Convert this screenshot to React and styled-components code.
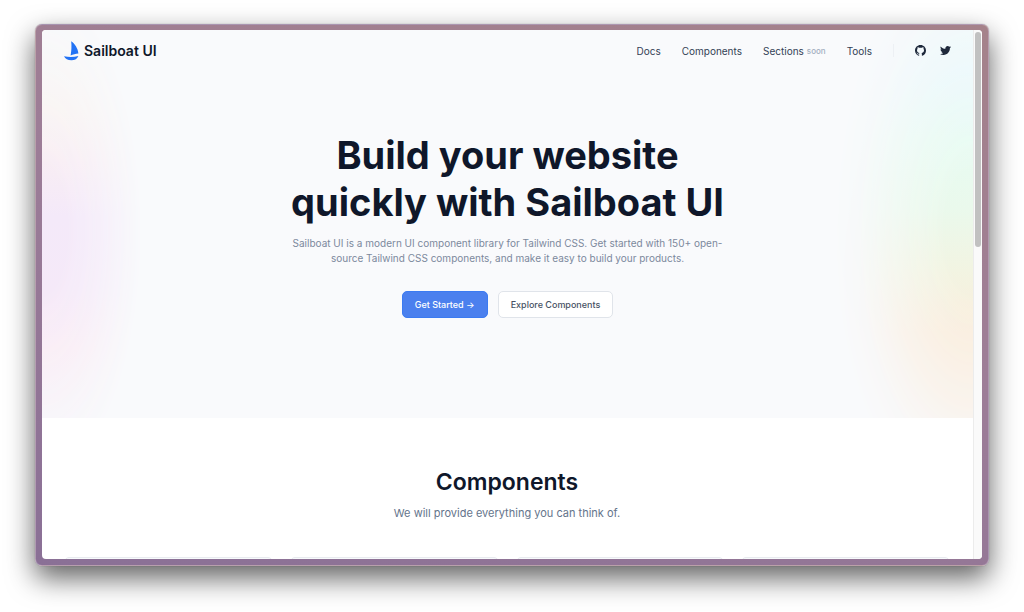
import React from "react";
import styled, { createGlobalStyle } from "styled-components";
import { FaTwitter } from "react-icons/fa";

const GlobalStyle = createGlobalStyle`
  *, *::before, *::after { box-sizing: border-box; }
  body {
    margin: 0;
    background: #fff;
    color: #0f172a;
    font-family: Inter, "Liberation Sans", sans-serif;
  }
  h1, h2, p { margin: 0; }
  a { color: inherit; text-decoration: none; }
`;

const Desktop = styled.div`
  display: flex;
  height: 100vh;
  padding: 24px 35px 46px;
  overflow: hidden;
`;

const Frame = styled.div`
  display: flex;
  flex: 1;
  min-width: 0;
  padding: 5px 6px 6px;
  border: 1px solid rgba(255, 255, 255, 0.25);
  border-radius: 7px;
  background: linear-gradient(195deg, #a5828a 0%, #9d7d97 45%, #8a7096 100%);
  box-shadow: 0 0 1px rgba(0, 0, 0, 0.4), 0 12px 28px rgba(0, 0, 0, 0.62);
`;

const Browser = styled.div`
  display: flex;
  flex: 1;
  min-width: 0;
  overflow: hidden;
  border-radius: 4px;
  background: #fff;
`;

const Page = styled.div`
  flex: 1;
  min-width: 0;
`;

const ScrollTrack = styled.div`
  width: 9px;
  padding: 2px 1px;
  border-left: 1px solid #ececec;
  background: #fafafa;
`;

const ScrollThumb = styled.div`
  width: 6px;
  height: 41%;
  border-radius: 3px;
  background: #c1c1c1;
`;

const Top = styled.div`
  position: relative;
  background: #f9fafc;
`;

const Glow = styled.div`
  position: absolute;
  top: 0;
  bottom: 0;
  pointer-events: none;
`;

const LeftGlow = styled(Glow)`
  left: 0;
  width: 100px;
  background: linear-gradient(#f8f7f6 0%, #f9f3f1 20%, #f8edf4 34%, #f4e9f9 48%, #f5e9f8 68%, #faeaf4 82%, #f7eff7 100%);
  mask-image: radial-gradient(100px 250px at 0 200px, #000 25%, rgba(0, 0, 0, 0.6) 60%, rgba(0, 0, 0, 0.12) 90%, transparent);
`;

const RightGlow = styled(Glow)`
  right: 0;
  width: 140px;
  background: linear-gradient(#e4f9f8 0%, #e5f8fb 10%, #e7fbf2 28%, #eaf9ec 46%, #f2f4e2 62%, #faecda 78%, #faecdc 100%);
  mask-image: radial-gradient(140px 290px at 100% 200px, #000 20%, rgba(0, 0, 0, 0.55) 55%, rgba(0, 0, 0, 0.12) 82%, transparent);
`;

const Header = styled.header`
  position: relative;
  display: flex;
  align-items: center;
  justify-content: space-between;
  height: 41px;
  padding: 0 22px;
`;

const Brand = styled.a`
  display: flex;
  align-items: center;
  gap: 5px;
  font-size: 14px;
  font-weight: 600;
  line-height: 20px;
`;

const Nav = styled.nav`
  display: flex;
  align-items: center;
  gap: 21px;
  color: #334155;
  font-size: 10px;
  line-height: 16px;
`;

const NavLink = styled.a`
  display: flex;
  align-items: center;
  gap: 3px;
`;

const Soon = styled.span`
  color: #a3afc0;
  font-size: 8px;
  font-weight: 500;
`;

const Social = styled.div`
  display: flex;
  gap: 14px;
  padding-left: 21px;
  border-left: 1px solid #edf0f4;
  color: #1e293b;
`;

const IconLink = styled.a`
  display: flex;
  padding: 1px 0;
`;

const Hero = styled.section`
  position: relative;
  display: flex;
  flex-direction: column;
  align-items: center;
  padding: 61px 20px 100px;
  text-align: center;
`;

const Title = styled.h1`
  max-width: 460px;
  font-size: 38px;
  font-weight: 700;
  line-height: 47px;
`;

const Lead = styled.p`
  max-width: 450px;
  margin-top: 10px;
  color: #7c899d;
  font-size: 10px;
  line-height: 15px;
`;

const Actions = styled.div`
  display: flex;
  gap: 10px;
  margin-top: 25px;
`;

const Button = styled.button`
  height: 27px;
  padding: 0 12px;
  border: 1px solid ${({ $primary }) => ($primary ? "#3b7bf2" : "#e0e4ea")};
  border-radius: 5px;
  background: ${({ $primary }) => ($primary ? "#4b80ee" : "#fff")};
  color: ${({ $primary }) => ($primary ? "#fff" : "#475264")};
  font: 500 9px/16px Inter, "Liberation Sans", sans-serif;
  white-space: nowrap;
`;

const Showcase = styled.section`
  padding: 49px 23px 0 22px;
  text-align: center;
`;

const SectionTitle = styled.h2`
  font-size: 23px;
  font-weight: 600;
  line-height: 30px;
`;

const SectionText = styled.p`
  margin-top: 8px;
  color: #64748b;
  font-size: 11px;
  line-height: 16px;
`;

const CardGrid = styled.div`
  display: grid;
  grid-template-columns: repeat(4, 1fr);
  gap: 17px;
  margin-top: 36px;
`;

const Card = styled.div`
  height: 140px;
  border: 1px solid #e8ebef;
  border-radius: 5px;
  background: #f8fafc;
`;

const Boat = () => (
  <svg width="15" height="20" viewBox="0 0 15 20" aria-hidden="true">
    <path d="M7.200 0.300C11 3 14 7.500 14.400 12.600C11.600 12.800 9 13.400 6.600 14.600C7.500 10 7.700 5 7.200 .300Z" fill="#2272f4" />
    <path d="M0 15.200C4.800 16.300 9.800 16.200 14.400 15C13.300 17.800 11 19.300 7.400 19.300C3.800 19.300 1.300 18 0 15.200Z" fill="#2272f4" />
  </svg>
);

const GitHubMark = () => (
  <svg width="11" height="11" viewBox="0 0 16 16" fill="currentColor" aria-hidden="true">
    <path d="M8 0C3.58 0 0 3.58 0 8c0 3.54 2.29 6.53 5.47 7.59.4.07.55-.17.55-.38 0-.19-.01-.82-.01-1.49-2.01.37-2.53-.49-2.69-.94-.09-.23-.48-.94-.82-1.13-.28-.15-.68-.52-.01-.53.63-.01 1.08.58 1.23.82.72 1.21 1.87.87 2.33.66.07-.52.28-.87.51-1.07-1.78-.2-3.64-.89-3.64-3.95 0-.87.31-1.59.82-2.15-.08-.2-.36-1.02.08-2.12 0 0 .67-.21 2.2.82.64-.18 1.32-.27 2-.27.68 0 1.36.09 2 .27 1.53-1.04 2.2-.82 2.2-.82.44 1.1.16 1.92.08 2.12.51.56.82 1.27.82 2.15 0 3.07-1.87 3.75-3.65 3.95.29.25.54.73.54 1.48 0 1.07-.01 1.93-.01 2.2 0 .21.15.46.55.38A8.012 8.012 0 0 0 16 8c0-4.42-3.58-8-8-8z" />
  </svg>
);

export default function App() {
  return (
    <Desktop>
      <GlobalStyle />
      <Frame>
        <Browser>
          <Page>
            <Top>
              <LeftGlow />
              <RightGlow />
              <Header>
                <Brand href="#">
                  <Boat />
                  Sailboat UI
                </Brand>
                <Nav>
                  <NavLink href="#docs">Docs</NavLink>
                  <NavLink href="#components">Components</NavLink>
                  <NavLink href="#sections">
                    Sections <Soon>soon</Soon>
                  </NavLink>
                  <NavLink href="#tools">Tools</NavLink>
                  <Social>
                    <IconLink href="#github" aria-label="GitHub">
                      <GitHubMark />
                    </IconLink>
                    <IconLink href="#twitter" aria-label="Twitter">
                      <FaTwitter size={11} />
                    </IconLink>
                  </Social>
                </Nav>
              </Header>
              <Hero>
                <Title>Build your website quickly with Sailboat UI</Title>
                <Lead>
                  Sailboat UI is a modern UI component library for Tailwind CSS. Get started with 150+ open-source
                  Tailwind CSS components, and make it easy to build your products.
                </Lead>
                <Actions>
                  <Button type="button" $primary>Get Started →</Button>
                  <Button type="button">Explore Components</Button>
                </Actions>
              </Hero>
            </Top>
            <Showcase id="components">
              <SectionTitle>Components</SectionTitle>
              <SectionText>We will provide everything you can think of.</SectionText>
              <CardGrid>
                <Card />
                <Card />
                <Card />
                <Card />
              </CardGrid>
            </Showcase>
          </Page>
          <ScrollTrack>
            <ScrollThumb />
          </ScrollTrack>
        </Browser>
      </Frame>
    </Desktop>
  );
}
